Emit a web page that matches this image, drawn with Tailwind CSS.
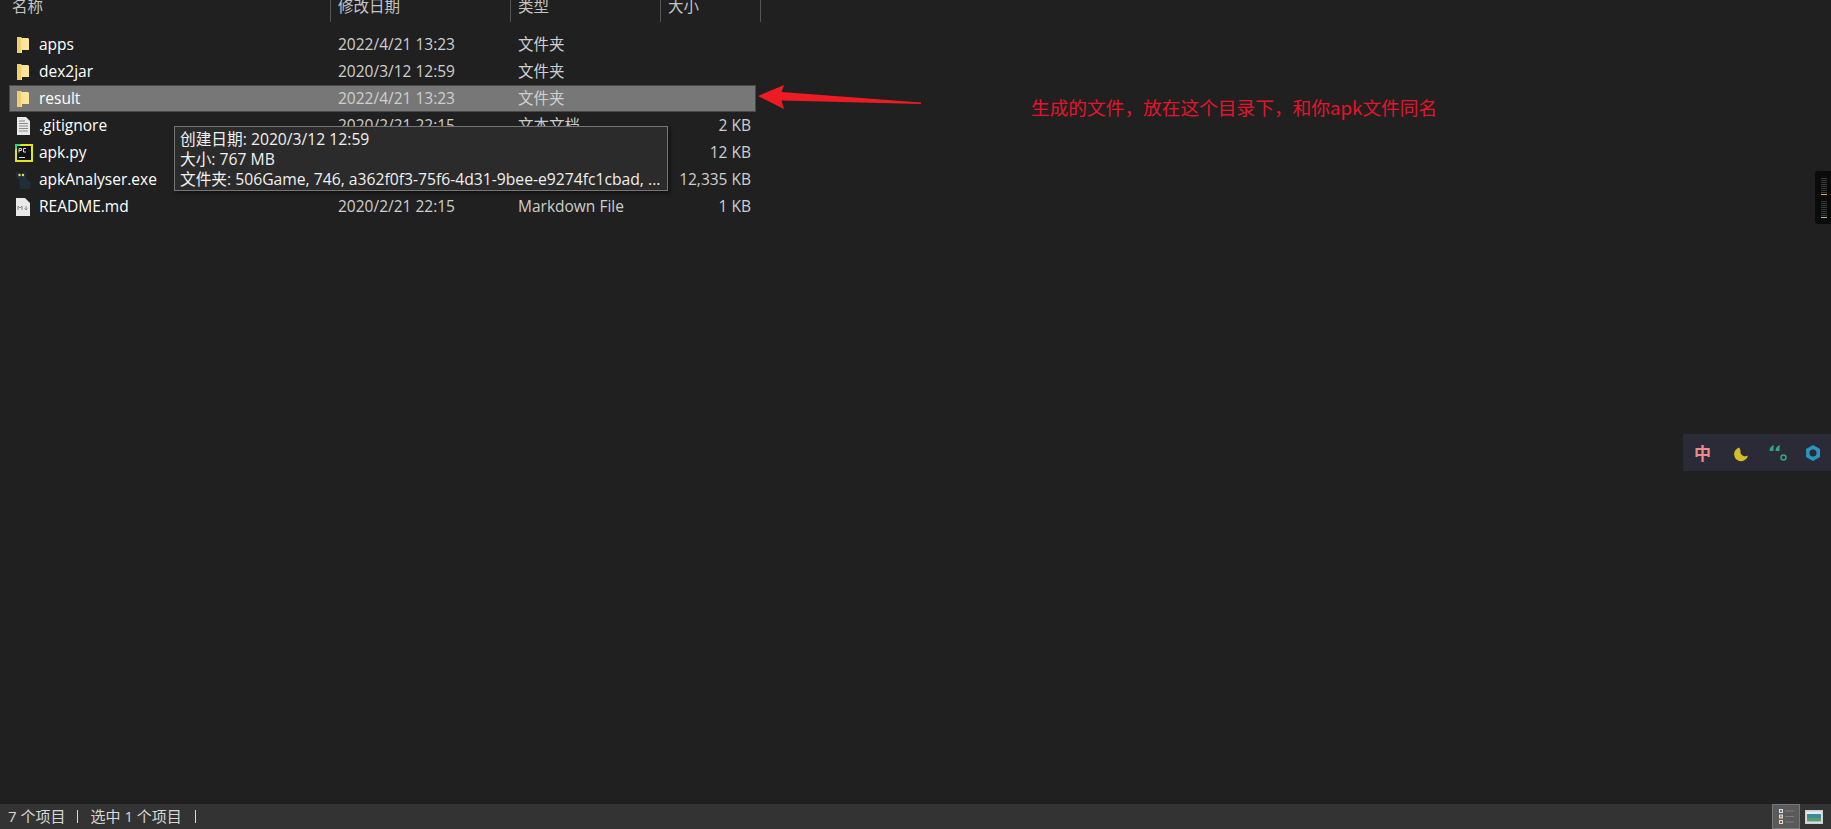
<!DOCTYPE html>
<html lang="zh-CN">
<head>
  <meta charset="UTF-8" />
  <title>result</title>
  <script src="https://cdn.jsdelivr.net/npm/@tailwindcss/browser@4"></script>
</head>
<body class="relative h-[829px] w-[1831px] overflow-hidden bg-[#202020] font-['Open_Sans','Noto_Sans_CJK_SC',sans-serif] text-[15.500px] text-[#cfcfcf]">
  <div class="flex h-[829px] flex-col">
    <!-- Column headers -->
    <div class="grid h-[22px] grid-cols-[331px_180px_150px_100px] leading-[12px] text-[#c4c4c4]">
      <div class="border-r border-[#555] pl-3">名称</div>
      <div class="border-r border-[#555] pl-[7px]">修改日期</div>
      <div class="border-r border-[#555] pl-[7px]">类型</div>
      <div class="border-r border-[#555] pl-[7px]">大小</div>
    </div>

    <!-- File list -->
    <div class="flex-1 pt-[9px] pl-[9px]">
      <div class="grid h-[27px] w-[747px] grid-cols-[328px_180px_150px_83px] items-center border border-transparent">
        <div class="flex items-center gap-[9px] pl-[6px] text-white">
          <svg width="14" height="18" viewBox="0 0 14 18"><path d="M1 1h4l1 1v15H1z" fill="#f3cd6c"/><path d="M5 2h7l1 1v11H6v3H5z" fill="#fde49a"/></svg>
          <span>apps</span>
        </div>
        <div>2022/4/21 13:23</div>
        <div>文件夹</div>
        <div></div>
      </div>
      <div class="grid h-[27px] w-[747px] grid-cols-[328px_180px_150px_83px] items-center border border-transparent">
        <div class="flex items-center gap-[9px] pl-[6px] text-white">
          <svg width="14" height="18" viewBox="0 0 14 18"><path d="M1 1h4l1 1v15H1z" fill="#f3cd6c"/><path d="M5 2h7l1 1v11H6v3H5z" fill="#fde49a"/></svg>
          <span>dex2jar</span>
        </div>
        <div>2020/3/12 12:59</div>
        <div>文件夹</div>
        <div></div>
      </div>
      <div class="grid h-[27px] w-[747px] grid-cols-[328px_180px_150px_83px] items-center border border-[#4a4a4a] bg-[#777777]">
        <div class="flex items-center gap-[9px] pl-[6px] text-white">
          <svg width="14" height="18" viewBox="0 0 14 18"><path d="M1 1h4l1 1v15H1z" fill="#f3cd6c"/><path d="M5 2h7l1 1v11H6v3H5z" fill="#fde49a"/></svg>
          <span>result</span>
        </div>
        <div>2022/4/21 13:23</div>
        <div>文件夹</div>
        <div></div>
      </div>
      <div class="grid h-[27px] w-[747px] grid-cols-[328px_180px_150px_83px] items-center border border-transparent">
        <div class="flex items-center gap-[9px] pl-[6px] text-white">
          <svg width="14" height="18" viewBox="0 0 14 18"><path d="M1 0h9l4 4v14H1z" fill="#e8e8e8"/><path d="M3 4h6M3 6.500h9M3 9h9M3 11.500h9M3 14h9" stroke="#8a8a8a"/></svg>
          <span>.gitignore</span>
        </div>
        <div>2020/2/21 22:15</div>
        <div>文本文档</div>
        <div class="text-right">2 KB</div>
      </div>
      <div class="grid h-[27px] w-[747px] grid-cols-[328px_180px_150px_83px] items-center border border-transparent">
        <div class="flex items-center gap-[9px] pl-[5px] text-white">
          <svg width="18" height="18" viewBox="0 0 18 18"><rect width="18" height="18" fill="#dcea1c"/><path d="M0 0h6L0 6z" fill="#21d789"/><rect x="2" y="2" width="14" height="14" fill="#111"/><rect x="4" y="13" width="6" height="1" fill="#ddd"/><path d="M4 8.500v-4h2.500v2H4M11 4.500H8.500v3.500H11" fill="none" stroke="#ddd"/></svg>
          <span class="-ml-[3px]">apk.py</span>
        </div>
        <div></div>
        <div></div>
        <div class="text-right">12 KB</div>
      </div>
      <div class="grid h-[27px] w-[747px] grid-cols-[328px_180px_150px_83px] items-center border border-transparent">
        <div class="flex items-center gap-[9px] pl-[5px] text-white">
          <svg width="18" height="20" viewBox="0 0 18 20"><path d="M1 1l3 2h4l3-2v7l2 3 3 1-1 7H5L4 10 1 7z" fill="#1f2f3a"/><circle cx="4.500" cy="5" r="1.200" fill="#e4e44a"/><circle cx="8" cy="5" r="1.200" fill="#e4e44a"/></svg>
          <span class="-ml-[3px]">apkAnalyser.exe</span>
        </div>
        <div></div>
        <div></div>
        <div class="text-right">12,335 KB</div>
      </div>
      <div class="grid h-[27px] w-[747px] grid-cols-[328px_180px_150px_83px] items-center border border-transparent">
        <div class="flex items-center gap-[9px] pl-[6px] text-white">
          <svg width="14" height="18" viewBox="0 0 14 18"><path d="M0 0h9l5 5v13H0z" fill="#e9e9e9"/><path d="M2 12V8l2 2 2-2v4M10 8v4M8.500 10.500l1.500 1.500 1.500-1.500" fill="none" stroke="#8a8a8a"/></svg>
          <span>README.md</span>
        </div>
        <div>2020/2/21 22:15</div>
        <div>Markdown File</div>
        <div class="text-right">1 KB</div>
      </div>
    </div>

    <!-- Status bar -->
    <div class="flex h-[25px] items-center justify-between bg-[#333333] pl-2 text-[15px] text-[#d8d8d8]">
      <div class="flex items-center">
        <span>7 个项目</span>
        <span class="ml-[12px] h-[13px] w-px bg-[#d8d8d8]"></span>
        <span class="ml-[12px]">选中 1 个项目</span>
        <span class="ml-[13px] h-[13px] w-px bg-[#d8d8d8]"></span>
      </div>
      <div class="flex h-full items-center pr-[8px]">
        <div class="flex h-full w-[28px] items-center justify-center border border-[#777] bg-[#5a5a5a]">
          <svg width="16" height="17" viewBox="0 0 16 17">
            <rect x="1" y="1" width="4" height="4" fill="#ddd"/><rect x="2" y="2" width="2" height="2" fill="#3a88b0"/>
            <rect x="1" y="6.500" width="4" height="4" fill="#ddd"/><rect x="2" y="7.500" width="2" height="2" fill="#b08a3a"/>
            <rect x="1" y="12" width="4" height="4" fill="#ddd"/><rect x="2" y="13" width="2" height="2" fill="#c03a2a"/>
            <path d="M7 3h9M7 8.500h9M7 14h9" stroke="#7c7c7c"/>
          </svg>
        </div>
        <svg class="ml-[5px]" width="18" height="14" viewBox="0 0 18 14"><rect width="18" height="14" fill="#cfcfcf"/><rect x="1.500" y="1.500" width="15" height="11" fill="#e2eef2"/><rect x="2" y="4" width="14" height="4" fill="#3e8a9c"/><rect x="2" y="8" width="14" height="3.500" fill="#5a9a70"/></svg>
      </div>
    </div>
  </div>

  <!-- Tooltip over the list -->
  <div class="absolute left-[174px] top-[126px] h-[65px] w-[494px] border border-[#767676] bg-[#2b2b2b] pt-[2px] pl-[5px] text-[15.700px] leading-[20px] text-[#f0f0f0] shadow-[2px_2px_4px_rgba(0,0,0,0.5)]">
    <div>创建日期: 2020/3/12 12:59</div>
    <div>大小: 767 MB</div>
    <div>文件夹: 506Game, 746, a362f0f3-75f6-4d31-9bee-e9274fc1cbad, ...</div>
  </div>

  <!-- Annotation -->
  <svg class="absolute left-[755px] top-[84px]" width="170" height="28" viewBox="0 0 170 28">
    <path d="M3 12L29 1 26.500 8 166 18.500 166 20 26.500 16.500 29 25z" fill="#ed1c24"/>
  </svg>
  <div class="absolute left-[1031px] top-[94px] whitespace-nowrap font-['Noto_Sans_CJK_SC',sans-serif] text-[18.700px] leading-[26px] text-[#e3152a]">生成的文件，放在这个目录下，和你apk文件同名</div>

  <!-- Meter widget -->
  <div class="absolute left-[1815px] top-[171px] flex h-[53px] w-[16px] flex-col gap-[6px] rounded-l-[3px] bg-[#0b0b0b] pt-[7px] pl-[6px]">
    <div class="flex flex-col gap-px">
      <div class="h-px w-[6px] bg-[#3a3a3a]"></div><div class="h-px w-[6px] bg-[#3a3a3a]"></div><div class="h-px w-[6px] bg-[#3a3a3a]"></div><div class="h-px w-[6px] bg-[#3a3a3a]"></div><div class="h-px w-[6px] bg-[#3a3a3a]"></div><div class="h-px w-[6px] bg-[#3a3a3a]"></div><div class="h-px w-[6px] bg-[#3a3a3a]"></div><div class="h-px w-[6px] bg-[#3a3a3a]"></div><div class="h-px w-[6px] bg-[#f5a623]"></div>
    </div>
    <div class="flex flex-col gap-px">
      <div class="h-px w-[6px] bg-[#3a3a3a]"></div><div class="h-px w-[6px] bg-[#3a3a3a]"></div><div class="h-px w-[6px] bg-[#3a3a3a]"></div><div class="h-px w-[6px] bg-[#3a3a3a]"></div><div class="h-px w-[6px] bg-[#3a3a3a]"></div><div class="h-px w-[6px] bg-[#3a3a3a]"></div><div class="h-px w-[6px] bg-[#3a3a3a]"></div><div class="h-px w-[6px] bg-[#3a3a3a]"></div><div class="h-px w-[6px] bg-[#8fdc4a]"></div>
    </div>
  </div>

  <!-- IME toolbar -->
  <div class="absolute left-[1683px] top-[434px] flex h-[37px] w-[148px] items-center justify-between bg-[#2b2b38] pl-[11px] pr-[9px]">
    <span class="font-['Noto_Sans_CJK_SC',sans-serif] text-[17px] font-bold leading-none text-[#f08a8a]">中</span>
    <svg class="mt-[3px] ml-[6px]" width="16" height="16" viewBox="0 0 16 16"><path d="M6 1.500A7 7 0 1 0 15 9.500C12 11.500 7.500 9.500 7.500 6 7.500 4 7 2.500 6 1.500z" fill="#d4bd2a"/></svg>
    <svg class="ml-[4px]" width="20" height="20" viewBox="0 0 20 20"><path d="M6 2C3 3 1.500 5 1.500 8H5.500V4.500zM12 2C9 3 7.500 5 7.500 8H11.500V4.500z" fill="#2da884"/><circle cx="15.500" cy="14.500" r="2.500" fill="none" stroke="#2da884" stroke-width="1.500"/></svg>
    <svg width="18" height="20" viewBox="0 0 18 20"><path d="M9 2l7 4v8l-7 4-7-4V6z" fill="#2a94c0"/><circle cx="9" cy="10" r="3.500" fill="#2b2b38"/></svg>
  </div>
</body>
</html>
